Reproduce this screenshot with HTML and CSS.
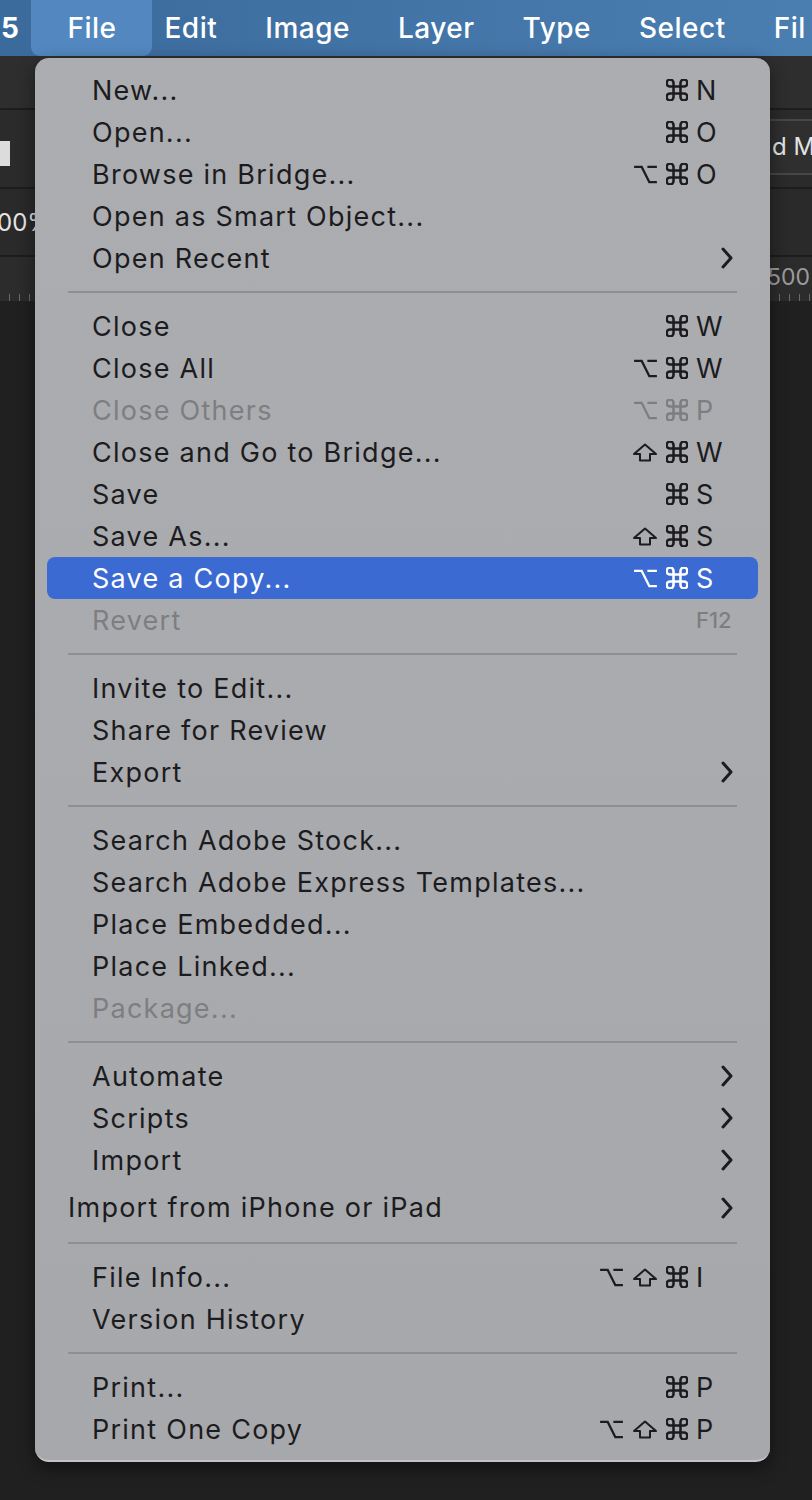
FILE: index.html
```html
<!DOCTYPE html>
<html lang="en">
<head>
    <meta charset="UTF-8">
    <meta name="viewport" content="width=device-width, initial-scale=1.0">
    <title>File Menu</title>
    <link rel="stylesheet" href="styles.css">
</head>
<body>
    <svg class="defs" width="0" height="0">
        <symbol id="cmd" viewBox="2.5 2.5 19 19">
            <path d="M15 6v12a3 3 0 1 0 3-3H6a3 3 0 1 0 3 3V6a3 3 0 1 0-3 3h12a3 3 0 1 0-3-3"/>
        </symbol>
        <symbol id="opt" viewBox="0 0 26 20">
            <path d="M1 2h8l8 16h8M15 2h10"/>
        </symbol>
        <symbol id="shift" viewBox="0 0 26 19">
            <path d="M8 17.5V11H2L13 1.5 24 11h-6v6.5z"/>
        </symbol>
        <symbol id="chev" viewBox="0 0 12 22">
            <path d="M2 2l8 9-8 9"/>
        </symbol>
    </svg>

    <div class="menubar">
        <div class="app">5</div>
        <div class="active">File</div>
        <div>Edit</div>
        <div>Image</div>
        <div>Layer</div>
        <div>Type</div>
        <div>Select</div>
        <div>Fil</div>
    </div>

    <div class="workspace">
        <div class="optionsbar"></div>
        <div class="toolrow">
            <div class="swatch"></div>
            <div class="field">d Ma</div>
        </div>
        <div class="tabrow"><span class="zoom">00%</span></div>
        <div class="ruler"><span class="ruler-num">500</span></div>
        <div class="canvas"></div>
    </div>

    <!-- File dropdown, drawn over the workspace -->
    <div class="dropdown">
        <div class="item"><span class="label">New...</span><span class="mods"><svg class="ic c"><use href="#cmd"/></svg></span><span class="key">N</span></div>
        <div class="item"><span class="label">Open...</span><span class="mods"><svg class="ic c"><use href="#cmd"/></svg></span><span class="key">O</span></div>
        <div class="item"><span class="label">Browse in Bridge...</span><span class="mods"><svg class="ic o"><use href="#opt"/></svg><svg class="ic c"><use href="#cmd"/></svg></span><span class="key">O</span></div>
        <div class="item"><span class="label">Open as Smart Object...</span></div>
        <div class="item"><span class="label">Open Recent</span><span class="key sub"><svg class="chev"><use href="#chev"/></svg></span></div>
        <div class="sep"></div>

        <div class="item"><span class="label">Close</span><span class="mods"><svg class="ic c"><use href="#cmd"/></svg></span><span class="key">W</span></div>
        <div class="item"><span class="label">Close All</span><span class="mods"><svg class="ic o"><use href="#opt"/></svg><svg class="ic c"><use href="#cmd"/></svg></span><span class="key">W</span></div>
        <div class="item off"><span class="label">Close Others</span><span class="mods"><svg class="ic o"><use href="#opt"/></svg><svg class="ic c"><use href="#cmd"/></svg></span><span class="key">P</span></div>
        <div class="item"><span class="label">Close and Go to Bridge...</span><span class="mods"><svg class="ic s"><use href="#shift"/></svg><svg class="ic c"><use href="#cmd"/></svg></span><span class="key">W</span></div>
        <div class="item"><span class="label">Save</span><span class="mods"><svg class="ic c"><use href="#cmd"/></svg></span><span class="key">S</span></div>
        <div class="item"><span class="label">Save As...</span><span class="mods"><svg class="ic s"><use href="#shift"/></svg><svg class="ic c"><use href="#cmd"/></svg></span><span class="key">S</span></div>
        <div class="item selected"><span class="label">Save a Copy...</span><span class="mods"><svg class="ic o"><use href="#opt"/></svg><svg class="ic c"><use href="#cmd"/></svg></span><span class="key">S</span></div>
        <div class="item off"><span class="label">Revert</span><span class="key fkey">F12</span></div>
        <div class="sep"></div>

        <div class="item"><span class="label">Invite to Edit...</span></div>
        <div class="item"><span class="label">Share for Review</span></div>
        <div class="item"><span class="label">Export</span><span class="key sub"><svg class="chev"><use href="#chev"/></svg></span></div>
        <div class="sep"></div>

        <div class="item"><span class="label">Search Adobe Stock...</span></div>
        <div class="item"><span class="label">Search Adobe Express Templates...</span></div>
        <div class="item"><span class="label">Place Embedded...</span></div>
        <div class="item"><span class="label">Place Linked...</span></div>
        <div class="item off"><span class="label">Package...</span></div>
        <div class="sep"></div>

        <div class="item"><span class="label">Automate</span><span class="key sub"><svg class="chev"><use href="#chev"/></svg></span></div>
        <div class="item"><span class="label">Scripts</span><span class="key sub"><svg class="chev"><use href="#chev"/></svg></span></div>
        <div class="item"><span class="label">Import</span><span class="key sub"><svg class="chev"><use href="#chev"/></svg></span></div>
        <div class="item wide"><span class="label">Import from iPhone or iPad</span><span class="key sub"><svg class="chev"><use href="#chev"/></svg></span></div>
        <div class="sep"></div>

        <div class="item"><span class="label">File Info...</span><span class="mods"><svg class="ic o"><use href="#opt"/></svg><svg class="ic s"><use href="#shift"/></svg><svg class="ic c"><use href="#cmd"/></svg></span><span class="key">I</span></div>
        <div class="item"><span class="label">Version History</span></div>
        <div class="sep"></div>

        <div class="item"><span class="label">Print...</span><span class="mods"><svg class="ic c"><use href="#cmd"/></svg></span><span class="key">P</span></div>
        <div class="item"><span class="label">Print One Copy</span><span class="mods"><svg class="ic o"><use href="#opt"/></svg><svg class="ic s"><use href="#shift"/></svg><svg class="ic c"><use href="#cmd"/></svg></span><span class="key">P</span></div>
    </div>
</body>
</html>
```

FILE: styles.css
```css
body {
    margin: 0;
    padding: 0;
    width: 812px;
    height: 1500px;
    overflow: hidden;
    position: relative;
    background-color: #212121;
    font-family: Inter, "Noto Sans", sans-serif;
}

.defs {
    position: absolute;
}

/* top menu bar */
.menubar {
    height: 56px;
    display: flex;
    align-items: center;
    gap: 48px;
    padding-left: 1px;
    background: linear-gradient(to right, #3b6a9c, #4a7eb1);
    color: #fff;
    font-size: 28px;
    font-weight: 500;
    letter-spacing: 0.5px;
    white-space: nowrap;
    overflow: hidden;
}

.menubar div {
    line-height: 56px;
}

.menubar .app {
    font-weight: 700;
}

.menubar .active {
    padding: 0 36px;
    margin: 0 -36px;
    background-color: #5287bf;
    border-radius: 0 0 9px 9px;
}

/* photoshop workspace behind the menu */
.workspace {
    display: flex;
    flex-direction: column;
    height: 1444px;
}

.optionsbar {
    height: 52px;
    background-color: #2e2e2e;
    border-bottom: 2px solid #1d1d1d;
}

.toolrow {
    height: 77px;
    background-color: #2b2b2b;
    border-bottom: 2px solid #1d1d1d;
    display: flex;
    align-items: flex-start;
}

.swatch {
    width: 10px;
    height: 25px;
    margin-top: 31px;
    background-color: #dcdcdc;
}

.field {
    margin-left: 730px;
    margin-top: 9px;
    height: 52px;
    padding-left: 32px;
    flex: 1;
    border-top: 2px solid #474747;
    border-bottom: 2px solid #474747;
    background-color: #2f2f2f;
    color: #e4e4e4;
    font-size: 24px;
    line-height: 52px;
    white-space: nowrap;
    overflow: hidden;
}

.tabrow {
    height: 66px;
    background-color: #2a2a2a;
    border-bottom: 2px solid #1d1d1d;
    display: flex;
    align-items: center;
}

.zoom {
    margin-left: -3px;
    color: #e6e6e6;
    font-size: 24px;
}

.ruler {
    height: 44px;
    background-color: #2c2c2c;
    display: flex;
    align-items: center;
    justify-content: flex-end;
    background-image: repeating-linear-gradient(to right, transparent 0, transparent 9px, #6a6a6a 9px, #6a6a6a 10px);
    background-size: 100% 7px;
    background-repeat: no-repeat;
    background-position: bottom;
}

.ruler-num {
    color: #9c9c9c;
    font-size: 23px;
    margin-right: 2px;
    margin-bottom: 4px;
}

.canvas {
    flex: 1;
    background-color: #202020;
}

/* dropdown */
.dropdown {
    position: absolute;
    left: 35px;
    top: 58px;
    width: 735px;
    box-sizing: border-box;
    padding: 11px 0 10px;
    background: linear-gradient(to bottom, #acadb1, #a7a8ac);
    border-radius: 14px;
    border-bottom: 2px solid #c3c4c7;
    box-shadow: 0 6px 18px rgba(0, 0, 0, 0.45);
    color: #1c1c1e;
    font-size: 27px;
    letter-spacing: 1.25px;
}

.item {
    height: 42px;
    margin: 0 12px;
    padding: 0 22px 0 45px;
    display: flex;
    align-items: center;
    border-radius: 8px;
    white-space: nowrap;
}

.item .label {
    flex: 1;
}

.item.wide {
    height: 49px;
    padding-left: 21px;
    padding-top: 4px;
    box-sizing: border-box;
}

.item.selected {
    background-color: #3b6ad3;
    color: #fff;
}

.item.off {
    color: #7d7e82;
}

.mods {
    display: flex;
    align-items: center;
    gap: 8px;
    margin-right: 8px;
}

.key {
    width: 40px;
    letter-spacing: 0;
}

.key.sub {
    display: flex;
    justify-content: flex-end;
    padding-right: 3px;
    box-sizing: border-box;
}

.key.fkey {
    font-size: 22px;
    font-weight: 500;
}

.ic {
    fill: none;
    stroke: currentColor;
    stroke-width: 2.3;
    stroke-linejoin: round;
}

.ic.c {
    width: 22px;
    height: 22px;
    stroke-width: 2.2;
}

.ic.o {
    width: 25px;
    height: 19px;
    stroke-linejoin: miter;
}

.ic.s {
    width: 26px;
    height: 19px;
    stroke-width: 2;
}

.chev {
    width: 12px;
    height: 22px;
    fill: none;
    stroke: #1c1c1e;
    stroke-width: 3;
    stroke-linecap: round;
    stroke-linejoin: round;
}

.sep {
    height: 2px;
    margin: 12px 33px;
    background-color: #8e8f93;
}
```
